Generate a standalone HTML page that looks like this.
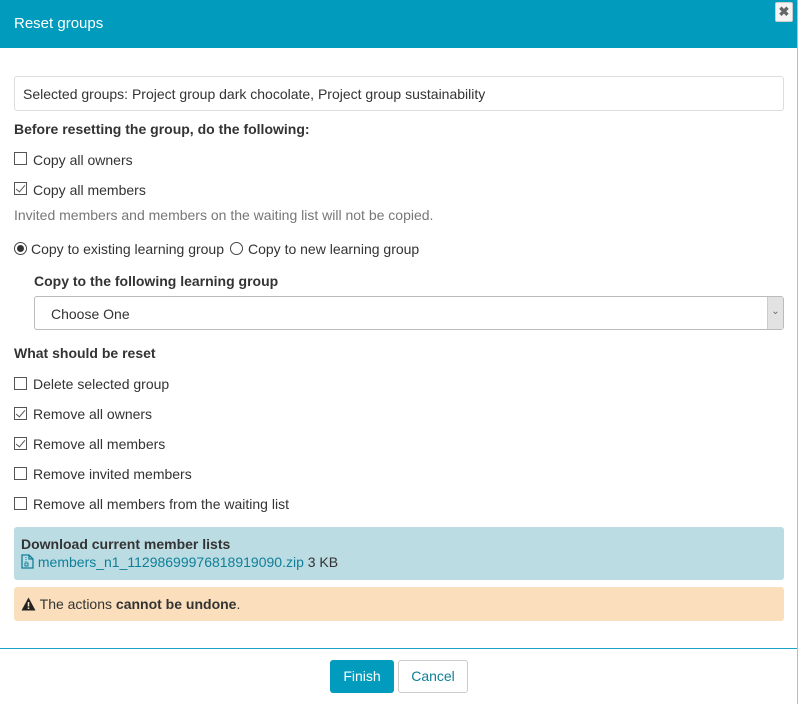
<!DOCTYPE html>
<html><head><style>
*{box-sizing:border-box;margin:0;padding:0}
body{width:799px;height:704px;background:#fff;font-family:"Liberation Sans",Arial,sans-serif;font-size:14px;color:#333;position:relative;overflow:hidden}
.hdr{position:absolute;left:0;top:0;width:797px;height:48px;background:#019bbd;color:#fff;font-size:15px;padding:15px 14px}
.rb{position:absolute;left:797px;top:0;width:1px;height:704px;background:#bbb}
.x{position:absolute;left:775px;top:2px;width:18px;height:20px;background:#f4f4f4;border:1px solid #ccc;border-radius:2px;color:#666;font-size:13px;font-weight:bold;text-align:center;line-height:18px}
.a{position:absolute;white-space:nowrap}
.box{position:absolute;left:14px;width:13px;height:13px;border:1px solid #555;background:#fff}
.box.c::after{content:"";position:absolute;left:3px;top:0px;width:4px;height:8px;border:solid #555;border-width:0 1.3px 1.3px 0;transform:rotate(40deg)}
.lbl{position:absolute;left:33px}
b{font-weight:bold}
.rad{position:absolute;width:13px;height:13px;border:1px solid #444;border-radius:50%;background:#fff}
</style></head><body>
<div class="hdr">Reset groups</div>
<div class="x">✖</div>
<div class="rb"></div>
<div class="a" style="left:14px;top:76px;width:770px;height:35px;border:1px solid #ddd;border-radius:3px;padding:9px 8px">Selected groups: Project group dark chocolate, Project group sustainability</div>
<div class="a" style="left:14px;top:121px"><b>Before resetting the group, do the following:</b></div>
<div class="box" style="top:152px"></div><div class="lbl a" style="top:152px">Copy all owners</div>
<div class="box c" style="top:182px"></div><div class="lbl a" style="top:182px">Copy all members</div>
<div class="a" style="left:14px;top:207px;color:#777">Invited members and members on the waiting list will not be copied.</div>
<div class="rad" style="left:14px;top:242px"><div style="position:absolute;left:2px;top:2px;width:7px;height:7px;border-radius:50%;background:#333"></div></div>
<div class="a" style="left:31px;top:241px">Copy to existing learning group</div>
<div class="rad" style="left:230px;top:242px"></div>
<div class="a" style="left:248px;top:241px">Copy to new learning group</div>
<div class="a" style="left:34px;top:273px"><b>Copy to the following learning group</b></div>
<div class="a" style="left:34px;top:296px;width:750px;height:34px;border:1px solid #bbb;border-radius:3px;padding:9px 16px">Choose One
<div style="position:absolute;right:0;top:0;width:16px;height:32px;background:#e2e2e2;border-left:1px solid #ccc;color:#666;font-size:10px;text-align:center;line-height:30px">⌄</div></div>
<div class="a" style="left:14px;top:345px"><b>What should be reset</b></div>
<div class="box" style="top:377px"></div><div class="lbl a" style="top:376px">Delete selected group</div>
<div class="box c" style="top:407px"></div><div class="lbl a" style="top:406px">Remove all owners</div>
<div class="box c" style="top:437px"></div><div class="lbl a" style="top:436px">Remove all members</div>
<div class="box" style="top:467px"></div><div class="lbl a" style="top:466px">Remove invited members</div>
<div class="box" style="top:497px"></div><div class="lbl a" style="top:496px">Remove all members from the waiting list</div>
<div class="a" style="left:14px;top:527px;width:770px;height:53px;background:#bcdce3;border-radius:3px;padding:8px 7px;line-height:18px">
<b>Download current member lists</b><br>
<span style="color:#0f7f98"><svg width="13" height="15" viewBox="0 0 13 15" style="vertical-align:-2px"><path d="M1 1h7l4 4v9H1z M8 1v4h4" fill="none" stroke="#0f7f98" stroke-width="1.3"/><path d="M5 3v6" stroke="#0f7f98" stroke-dasharray="1 1"/><rect x="4" y="9" width="3" height="3" fill="none" stroke="#0f7f98"/></svg> members_n1_11298699976818919090.zip</span> 3 KB</div>
<div class="a" style="left:14px;top:587px;width:770px;height:34px;background:#fbdfbc;border-radius:3px;padding:9px 7px"><svg width="15" height="14" viewBox="0 0 15 14" style="vertical-align:-2px"><path d="M7.5 0.5L14.5 13.5H0.5Z" fill="#222"/><path d="M7.5 5v4.5M7.5 10.5v1.5" stroke="#fbdfbc" stroke-width="1.6"/></svg> The actions <b>cannot be undone</b>.</div>
<div class="a" style="left:0;top:648px;width:797px;height:1px;background:#1aa3c3"></div>
<div class="a" style="left:330px;top:660px;width:64px;height:33px;background:#019bbd;color:#fff;border-radius:3px;text-align:center;line-height:33px">Finish</div>
<div class="a" style="left:398px;top:660px;width:70px;height:33px;border:1px solid #ccc;color:#0f7f98;border-radius:3px;text-align:center;line-height:31px">Cancel</div>
</body></html>
